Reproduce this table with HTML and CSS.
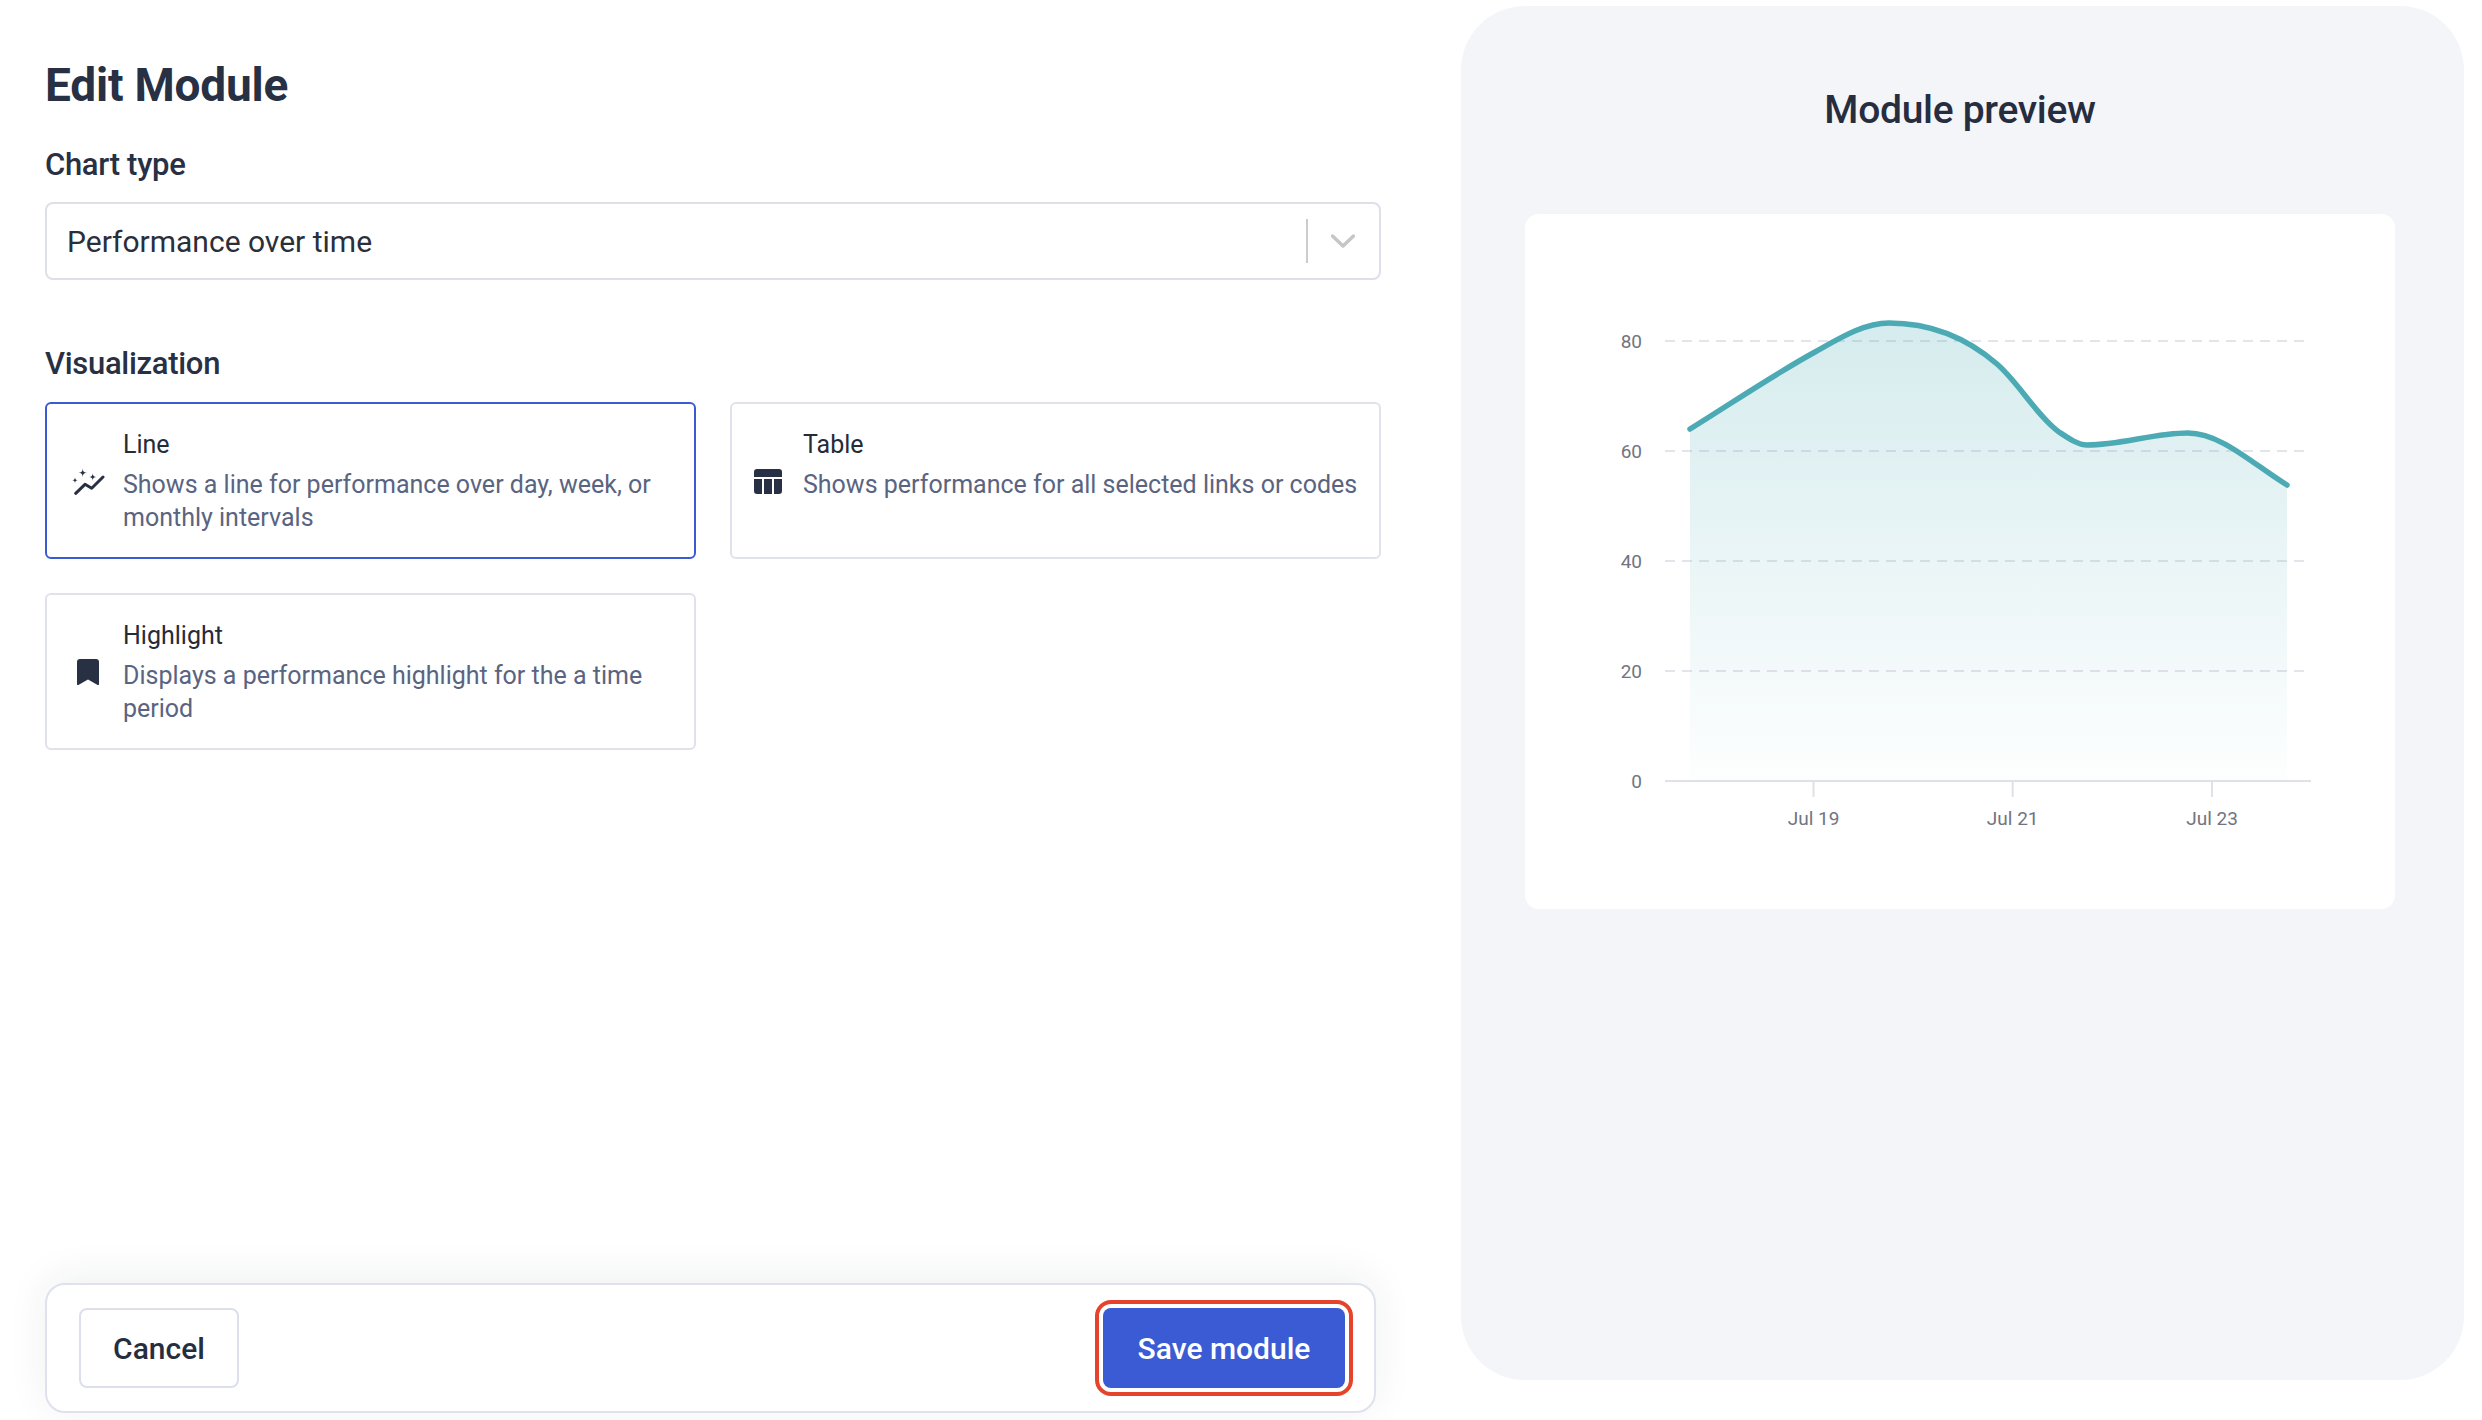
FILE: index.html
```html
<!DOCTYPE html>
<html lang="en">
<head>
<meta charset="utf-8">
<title>Edit Module</title>
<link rel="stylesheet" href="styles.css">
</head>
<body>
<div class="page">
  <main class="editor">
    <h1 class="title">Edit Module</h1>

    <div class="field-label label-chart">Chart type</div>
    <div class="select">
      <span class="select-value">Performance over time</span>
      <span class="select-sep"></span>
      <svg class="select-chevron" width="24" height="14" viewBox="0 0 24 14"><polyline points="1.5,2 12,12 22.5,2" fill="none" stroke="#c6c6c6" stroke-width="3.5" stroke-linecap="round" stroke-linejoin="round"/></svg>
    </div>

    <div class="field-label label-vis">Visualization</div>
    <div class="cards">
      <div class="card card-selected">
        <svg class="card-icon icon-wide" width="36" height="30" viewBox="0 0 36 30">
          <path d="M13.7 2.4 Q13.7 6.7 18 6.7 Q13.7 6.7 13.7 11 Q13.7 6.7 9.4 6.7 Q13.7 6.7 13.7 2.4Z" fill="#283044"/>
          <path d="M23.7 7.3 Q23.7 11 27.4 11 Q23.7 11 23.7 14.7 Q23.7 11 20 11 Q23.7 11 23.7 7.3Z" fill="#283044"/>
          <path d="M6 11.2 Q6 14.3 9.1 14.3 Q6 14.3 6 17.4 Q6 14.3 2.9 14.3 Q6 14.3 6 11.2Z" fill="#283044"/>
          <polyline points="6.7,27.3 16,18.3 22.7,22.3 34,11" fill="none" stroke="#283044" stroke-width="3" stroke-linecap="round" stroke-linejoin="round"/>
        </svg>
        <div class="card-text">
          <div class="card-title">Line</div>
          <div class="card-desc">Shows a line for performance over day, week, or monthly intervals</div>
        </div>
      </div>
      <div class="card">
        <svg class="card-icon icon-table" width="31" height="25" viewBox="0 0 31 25">
          <path d="M3 0h22a3 3 0 0 1 3 3v5H0V3a3 3 0 0 1 3-3z" fill="#283044"/>
          <path d="M0 10h8v15H3a3 3 0 0 1-3-3z" fill="#283044"/>
          <rect x="10" y="10" width="8" height="15" fill="#283044"/>
          <path d="M20 10h8v12a3 3 0 0 1-3 3h-5z" fill="#283044"/>
        </svg>
        <div class="card-text">
          <div class="card-title">Table</div>
          <div class="card-desc">Shows performance for all selected links or codes</div>
        </div>
      </div>
      <div class="card">
        <svg class="card-icon icon-wide" width="36" height="30" viewBox="0 0 36 30">
          <path d="M11 2h16a3 3 0 0 1 3 3v22.2a0.9 0.9 0 0 1-1.4 0.7L19 22.6l-9.6 5.3A0.9 0.9 0 0 1 8 27.2V5a3 3 0 0 1 3-3z" fill="#283044"/>
        </svg>
        <div class="card-text">
          <div class="card-title">Highlight</div>
          <div class="card-desc">Displays a performance highlight for the a time period</div>
        </div>
      </div>
    </div>

    <footer class="footer">
      <button class="btn btn-cancel">Cancel</button>
      <button class="btn btn-save">Save module</button>
    </footer>
  </main>

  <aside class="preview">
    <h2 class="preview-title">Module preview</h2>
    <div class="chart-card">
      <svg class="chart" width="870" height="695" viewBox="0 0 870 695">
        <defs>
          <linearGradient id="areaFill" x1="0" y1="0" x2="0" y2="1">
            <stop offset="0" stop-color="#4aaab4" stop-opacity="0.23"/>
            <stop offset="1" stop-color="#4aaab4" stop-opacity="0.01"/>
          </linearGradient>
        </defs>
        <g stroke="#e3e5ea" stroke-width="2" stroke-dasharray="10 7">
          <line x1="140" y1="127" x2="786" y2="127"/>
          <line x1="140" y1="237" x2="786" y2="237"/>
          <line x1="140" y1="347" x2="786" y2="347"/>
          <line x1="140" y1="457" x2="786" y2="457"/>
        </g>
        <path d="M165 215 C207 189 248 161 290 138 C315 124 339 109 364 109 C400 109 436 119 472 150 C493 168 513 203 534 218 C543 224 553 231 562 231 C596 231 629 219 663 219 C696 219 729 251 762 271 L762 566 L165 566 Z" fill="url(#areaFill)"/>
        <g stroke="#e0e1e6" stroke-width="2">
          <line x1="140" y1="567" x2="786" y2="567"/>
          <line x1="288.5" y1="567" x2="288.5" y2="583"/>
          <line x1="487.7" y1="567" x2="487.7" y2="583"/>
          <line x1="687" y1="567" x2="687" y2="583"/>
        </g>
        <path d="M165 215 C207 189 248 161 290 138 C315 124 339 109 364 109 C400 109 436 119 472 150 C493 168 513 203 534 218 C543 224 553 231 562 231 C596 231 629 219 663 219 C696 219 729 251 762 271" fill="none" stroke="#4caab4" stroke-width="5.5" stroke-linecap="round" stroke-linejoin="round"/>
        <g class="axis-text" text-anchor="end">
          <text x="117" y="134">80</text>
          <text x="117" y="244">60</text>
          <text x="117" y="354">40</text>
          <text x="117" y="464">20</text>
          <text x="117" y="574">0</text>
        </g>
        <g class="axis-text" text-anchor="middle">
          <text x="288.5" y="611">Jul 19</text>
          <text x="487.7" y="611">Jul 21</text>
          <text x="687" y="611">Jul 23</text>
        </g>
      </svg>
    </div>
  </aside>
</div>
</body>
</html>
```
FILE: styles.css
```css
html, body {
  margin: 0;
  padding: 0;
  background: #ffffff;
}

body {
  font-family: Roboto, "Liberation Sans", Arial, sans-serif;
  color: #262d3f;
}

.page {
  display: flex;
  align-items: flex-start;
  gap: 80px;
  height: 1420px;
  padding: 0 18px 0 45px;
  box-sizing: border-box;
}

/* ---------- editor column ---------- */
.editor {
  width: 1336px;
  height: 1420px;
  display: flex;
  flex-direction: column;
  padding-bottom: 7px;
  box-sizing: border-box;
}

.title {
  margin: 58px 0 0;
  font-size: 46px;
  line-height: 54px;
  font-weight: 700;
  color: #283044;
  letter-spacing: -0.2px;
}

.field-label {
  font-size: 31px;
  line-height: 36px;
  font-weight: 500;
  color: #283044;
  letter-spacing: -0.3px;
}

.label-chart {
  margin-top: 35px;
}

.label-vis {
  margin-top: 66px;
}

.select {
  margin-top: 19px;
  height: 78px;
  box-sizing: border-box;
  border: 2px solid #dde0e9;
  border-radius: 8px;
  display: flex;
  align-items: center;
  padding: 0 24px 0 20px;
}

.select-value {
  flex: 1;
  font-size: 30px;
  color: #2b2f3a;
}

.select-sep {
  width: 2px;
  height: 44px;
  background: #cccccc;
  margin-right: 23px;
}

.select-chevron {
  display: block;
}

.cards {
  margin-top: 20px;
  display: grid;
  grid-template-columns: 1fr 1fr;
  column-gap: 34px;
  row-gap: 34px;
}

.card {
  display: flex;
  align-items: center;
  gap: 18px;
  min-height: 157px;
  box-sizing: border-box;
  padding: 24px 14px 23px 22px;
  border: 2px solid #dfe2eb;
  border-radius: 6px;
  background: #ffffff;
}

.card-selected {
  border-color: #3a5bd4;
}

.card-icon {
  flex: none;
  display: block;
}

.card-text {
  align-self: flex-start;
}

.card-title {
  font-size: 25px;
  line-height: 33px;
  color: #262b38;
}

.card-desc {
  margin-top: 7px;
  font-size: 25px;
  line-height: 33px;
  color: #5a6480;
}

/* ---------- footer ---------- */
.footer {
  margin-top: auto;
  margin-right: 5px;
  height: 130px;
  box-sizing: border-box;
  border: 2px solid #dfe2ec;
  border-radius: 20px;
  background: #ffffff;
  box-shadow: 0 -6px 40px rgba(30, 40, 60, 0.07);
  display: flex;
  align-items: center;
  justify-content: space-between;
  padding: 0 29px 0 32px;
}

.btn {
  font-family: Roboto, "Liberation Sans", Arial, sans-serif;
  font-size: 30px;
  font-weight: 500;
  height: 80px;
  box-sizing: border-box;
  border-radius: 8px;
  cursor: pointer;
}

.btn-cancel {
  width: 160px;
  background: #ffffff;
  border: 2px solid #dde0ea;
  color: #262d3f;
}

.btn-save {
  width: 242px;
  background: #3a5bd3;
  border: none;
  color: #ffffff;
  outline: 4px solid #e5432b;
  outline-offset: 4px;
}

/* ---------- preview panel ---------- */
.preview {
  flex: 1;
  margin-top: 6px;
  height: 1374px;
  box-sizing: border-box;
  background: #f4f5f9;
  border-radius: 64px;
  padding: 82px 69px 0 64px;
}

.preview-title {
  margin: 0;
  text-align: center;
  font-size: 39px;
  line-height: 44px;
  font-weight: 500;
  color: #262d3f;
  letter-spacing: -0.3px;
}

.chart-card {
  margin-top: 82px;
  width: 870px;
  height: 695px;
  background: #ffffff;
  border-radius: 14px;
}

.chart {
  display: block;
}

.axis-text {
  font-family: Roboto, "Liberation Sans", Arial, sans-serif;
  font-size: 19px;
  fill: #71747f;
}
```
